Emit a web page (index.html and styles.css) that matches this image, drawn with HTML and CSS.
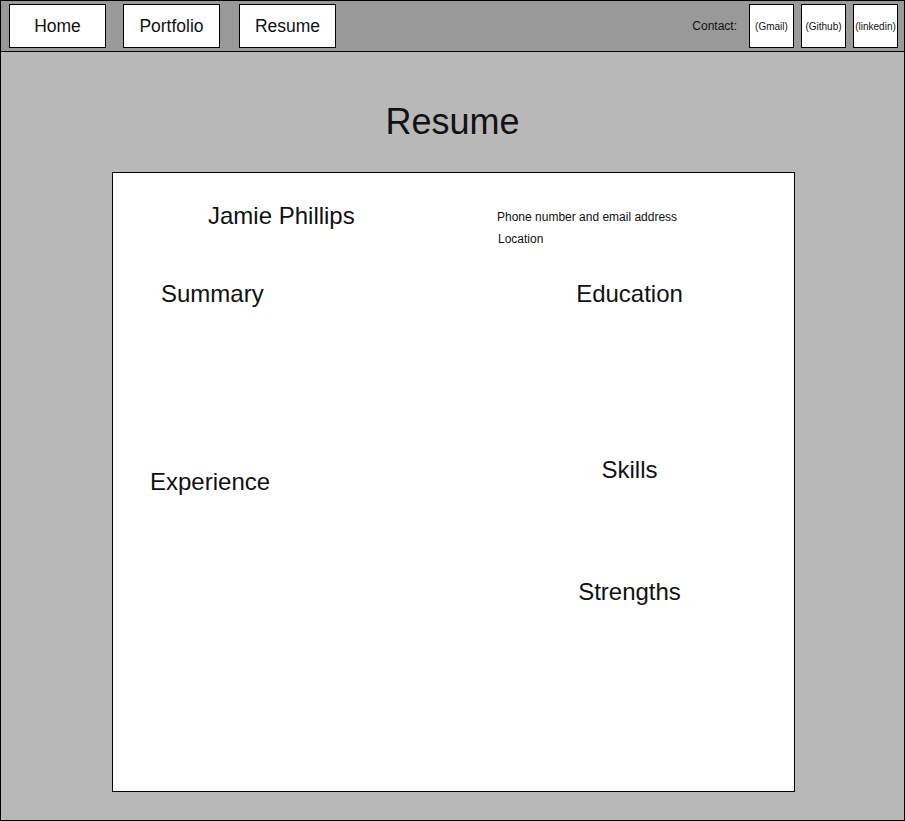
FILE: index.html
```html
<!DOCTYPE html>
<html lang="en">
<head>
<meta charset="utf-8">
<title>Resume</title>
<link rel="stylesheet" href="styles.css">
</head>
<body>
<div class="page">
  <header class="topbar">
    <nav class="nav">
      <a class="nav-btn" href="#">Home</a>
      <a class="nav-btn" href="#">Portfolio</a>
      <a class="nav-btn" href="#">Resume</a>
    </nav>
    <div class="contact">
      <span class="contact-label">Contact:</span>
      <a class="contact-btn" href="#">(Gmail)</a>
      <a class="contact-btn" href="#">(Github)</a>
      <a class="contact-btn" href="#">(linkedin)</a>
    </div>
  </header>
  <main class="main">
    <h1 class="title">Resume</h1>
    <section class="card">
      <div class="col col-left">
        <div class="name">Jamie Phillips</div>
        <h2 class="heading summary">Summary</h2>
        <h2 class="heading experience">Experience</h2>
      </div>
      <div class="col col-right">
        <div class="info">Phone number and email address</div>
        <div class="info location">Location</div>
        <h2 class="heading education">Education</h2>
        <h2 class="heading skills">Skills</h2>
        <h2 class="heading strengths">Strengths</h2>
      </div>
    </section>
  </main>
</div>
</body>
</html>
```
FILE: styles.css
```css
* { box-sizing: border-box; }
html, body { margin: 0; padding: 0; }
body {
  font-family: "Liberation Sans", Arial, sans-serif;
  color: #111;
  background: #b8b8b8;
}
.page {
  width: 905px;
  height: 821px;
  border: 1px solid #000;
  background: #b8b8b8;
  display: flex;
  flex-direction: column;
}
.topbar {
  height: 51px;
  background: #999999;
  border-bottom: 1px solid #000;
  padding: 3px 6px 0 8px;
  display: flex;
  justify-content: space-between;
  align-items: flex-start;
}
.nav {
  display: flex;
  gap: 17px;
}
.nav-btn, .contact-btn {
  display: flex;
  align-items: center;
  justify-content: center;
  height: 44px;
  background: #fff;
  border: 1px solid #000;
  color: #111;
  text-decoration: none;
}
.nav-btn {
  width: 97px;
  font-size: 17.5px;
}
.nav-btn + .nav-btn + .nav-btn { margin-left: 2px; }
.contact {
  display: flex;
  align-items: center;
  gap: 7px;
}
.contact-label {
  font-size: 12px;
  margin-right: 5px;
  padding-bottom: 1px;
}
.contact-btn {
  width: 45px;
  font-size: 10px;
  white-space: nowrap;
}
.main {
  flex: 1;
  padding-top: 50px;
}
.title {
  margin: 0;
  font-size: 36px;
  line-height: 40px;
  font-weight: normal;
  text-align: center;
}
.card {
  margin: 30px 0 0 111px;
  width: 683px;
  height: 620px;
  background: #fff;
  border: 1px solid #000;
  display: grid;
  grid-template-columns: 384px 265px;
}
.col {
  display: flex;
  flex-direction: column;
  align-items: flex-start;
}
.heading {
  margin: 0;
  font-size: 24px;
  line-height: 28px;
  font-weight: normal;
}
.name {
  margin: 29px 0 0 95px;
  font-size: 24px;
  line-height: 28px;
}
.summary { margin: 50px 0 0 48px; }
.experience { margin: 160px 0 0 37px; }
.col-right { align-items: stretch; }
.col-right .heading { text-align: center; }
.info {
  font-size: 12px;
  line-height: 22px;
}
.info:first-child { margin-top: 33px; }
.location { margin-left: 1px; }
.education { margin-top: 30px; }
.skills { margin-top: 148px; }
.strengths { margin-top: 94px; }
```
